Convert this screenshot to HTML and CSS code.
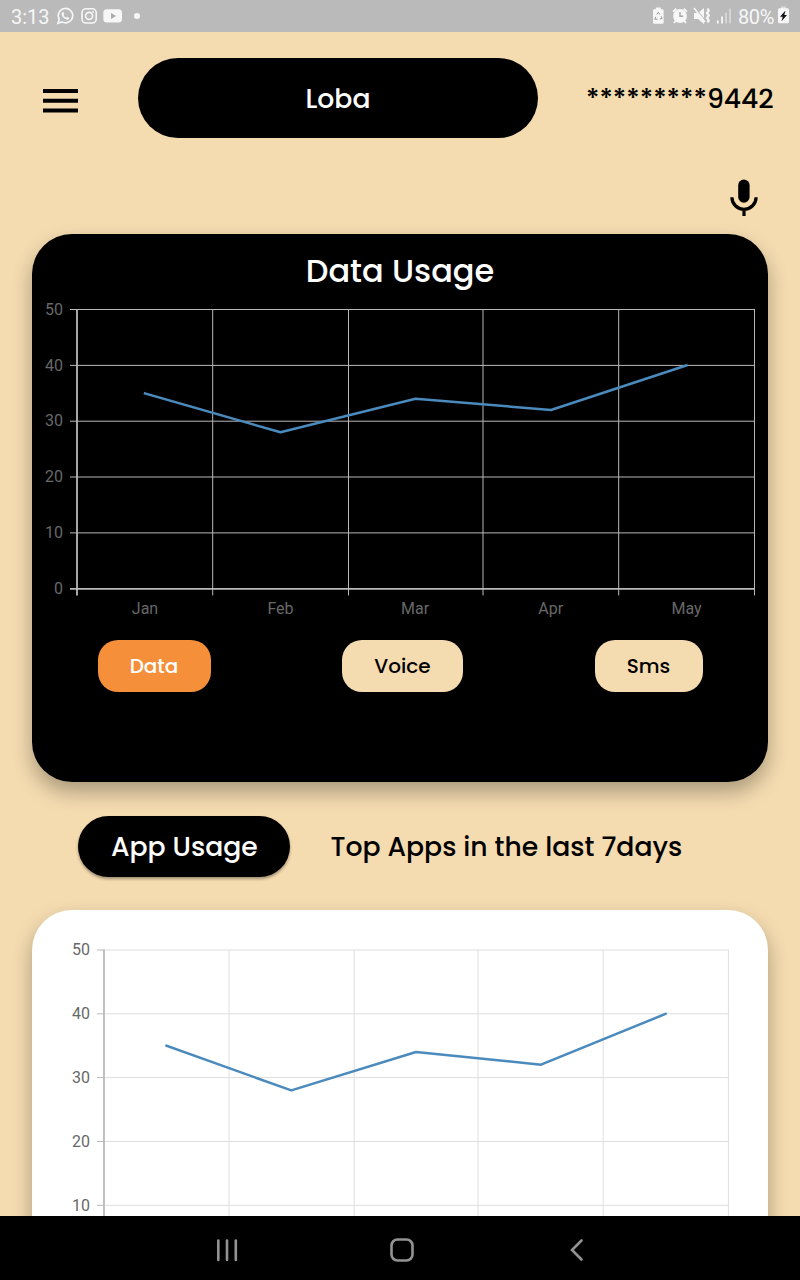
FILE: index.html
```html
<!DOCTYPE html>
<html lang="en">
<head>
<meta charset="utf-8">
<title>Data Usage</title>
<link rel="stylesheet" href="styles.css">
</head>
<body>
<div class="screen">
  <header class="status">
    <span class="clock">3:13</span>
    <svg class="status-left" width="90" height="20" viewBox="54 6 90 20" fill="none" stroke="#f7f7f7" stroke-width="1.6">
      <path d="M58 23.2l1.2-4.1a7.2 7.2 0 1 1 2.8 2.8z"/>
      <path d="M62.3 12.3c-1.8 1.7.1 4.9 2.2 6.3 2.2 1.5 4.3 1.4 4.8-.5l-2.2-1.4-1.1 1c-1.2-.6-2-1.5-2.5-2.6l.9-1-1-2z" fill="#f7f7f7" stroke="none"/>
      <rect x="82" y="8.800" width="14.200" height="14.200" rx="4"/>
      <circle cx="89.100" cy="15.900" r="3.500"/><circle cx="93" cy="12" r=".9" fill="#f7f7f7" stroke="none"/>
      <rect x="103.300" y="9.200" width="18.700" height="13.400" rx="3.500" fill="#f7f7f7" stroke="none"/>
      <path d="M111 13v6l5-3z" fill="#aaa" stroke="none"/>
      <circle cx="137" cy="16" r="3" fill="#f7f7f7" stroke="none"/>
    </svg>
    <svg class="status-right" width="84" height="20" viewBox="650 6 84 20" fill="none" stroke="#f7f7f7" stroke-width="1.800">
      <path d="M653 10.500q0-1.200 1.200-1.200h1.600V7.500h5v1.800h1.600q1.200 0 1.200 1.200v12q0 1.200-1.200 1.200h-8.200q-1.200 0-1.200-1.200z" fill="#f7f7f7" stroke="none"/>
      <path d="M656.800 14.500l1.500-2.300 1.500 2.300M661 16.200l1.100 2.300-2.300.5M657.500 19.200h-2.800l1.200-2.400" stroke="#999" stroke-width="1"/>
      <circle cx="680" cy="16" r="6" fill="#f7f7f7"/>
      <path d="M680 12v4.300h3.300" stroke="#aaa" stroke-width="1.500"/>
      <path d="M673 11.600l3.300-3M687 11.600l-3.300-3M675.800 20.700l-1.800 2.300M684.200 20.700l1.800 2.300"/>
      <path d="M694 13h4l6-5v16l-6-5h-4z" fill="#f7f7f7" stroke="none"/>
      <path d="M694.800 7.300l10.500 13.200" stroke="#bababa" stroke-width="1.200"/><path d="M694 8l11 14" stroke-width="1.500"/>
      <path d="M707.500 8.500l1.300 2-1.800 2.500 1.800 2.500-1.800 2.500 1.800 2.500-1.300 2" stroke-width="2.200"/>
      <path d="M717.800 20.500v3M722 16.500v7" stroke-width="1.800"/>
      <path d="M726 12.500v11M730 8.500v15" stroke="#d7d7d7" stroke-width="1.800"/>
    </svg>
    <span class="percent">80%</span>
    <svg width="12" height="20" viewBox="778 6 12 20">
      <path d="M781 6.500h5v3h-5z" fill="#ddd"/><rect x="778" y="8.300" width="11" height="15" rx="1.500" fill="#f7f7f7"/>
      <path d="M785.500 10.500l-5.500 6.300h2.700l-1.200 4.500 5.500-6.300h-2.700z" fill="#111"/>
    </svg>
  </header>

  <main class="content">
    <div class="top">
      <svg class="menu" width="36" height="26" viewBox="43 88 36 26" fill="#000"><path d="M43 89h35v4H43zM43 98.800h35v3.900H43zM43 108.500h35v3.900H43z"/></svg>
      <div class="name">Loba</div>
      <div class="number">*********9442</div>
    </div>
    <div class="voice-row">
      <svg width="28" height="38" viewBox="729.500 179 28 38">
        <rect x="737.700" y="179.500" width="11.400" height="23.200" rx="5.700"/>
        <path d="M731.400 197.200a12.100 12.100 0 0 0 24.200 0M743.500 209v7" fill="none" stroke="#000" stroke-width="3.200"/>
      </svg>
    </div>

    <section class="card dark">
      <h1>Data Usage</h1>
      <svg class="chart" width="736" height="325" viewBox="32 300 736 325">
        <g fill="none" stroke="#b9b9b9" stroke-width="1">
          <path d="M70 309.500H755M70 365.400H755M70 421.200H755M70 477H755M70 532.900H755"/>
          <path d="M212.700 309V595.500M348.500 309V595.500M483 309V595.500M618.700 309V595.500M754.500 309V595.500"/>
          <path d="M77 309V595.500M70 588.800H755" stroke-width="1.800"/>
        </g>
        <path class="line" d="M145 393.400l135.500 38.900L415.500 398.800 551 410 686.500 365.400"/>
        <g class="labels y">
          <text x="63" y="315">50</text><text x="63" y="371">40</text><text x="63" y="426">30</text>
          <text x="63" y="482">20</text><text x="63" y="538">10</text><text x="63" y="594">0</text>
        </g>
        <g class="labels x">
          <text x="145" y="614">Jan</text><text x="280.500" y="614">Feb</text><text x="415" y="614">Mar</text>
          <text x="550.700" y="614">Apr</text><text x="686.500" y="614">May</text>
        </g>
      </svg>
      <div class="tabs">
        <button class="tab active">Data</button>
        <button class="tab voice">Voice</button>
        <button class="tab sms">Sms</button>
      </div>
    </section>

    <div class="usage-row">
      <button class="usage">App Usage</button>
      <span class="caption">Top Apps in the last 7days</span>
    </div>

    <section class="card light">
      <svg class="chart" width="736" height="306" viewBox="32 910 736 306">
        <g fill="none" stroke="#dedede" stroke-width="1">
          <path d="M104 950H729M104 1013.800H729M104 1077.600H729M104 1141.500H729M104 1205.300H729"/>
          <path d="M229 950V1216M354.200 950V1216M478 950V1216M603.200 950V1216M728.400 950V1216"/>
          <path d="M97 950h7M97 1013.800h7M97 1077.600h7M97 1141.500h7M97 1205.300h7" stroke="#b9b9b9"/>
          <path d="M104 949.500V1216" stroke="#b9b9b9" stroke-width="1.800"/>
        </g>
        <path class="line" d="M166.500 1045.800l124.800 44.600L416 1052l125 12.700 124.500-50.800"/>
        <g class="labels y">
          <text x="90" y="955">50</text><text x="90" y="1019">40</text><text x="90" y="1083">30</text>
          <text x="90" y="1147">20</text><text x="90" y="1211">10</text>
        </g>
      </svg>
    </section>
  </main>

  <nav class="navbar">
    <svg width="800" height="64" viewBox="0 1216 800 64" fill="none" stroke="#939393" stroke-width="2.600" stroke-linecap="round">
      <path d="M218.300 1240.500v19.500M227 1240.500v19.500M235.800 1240.500v19.500"/>
      <rect x="391.500" y="1239.500" width="21" height="21" rx="6"/>
      <path d="M581.500 1240.500l-9.500 9.500 9.500 9.500"/>
    </svg>
  </nav>
</div>
</body>
</html>
```
FILE: styles.css
```css
* { box-sizing: border-box; }
body { margin: 0; font-family: Poppins, Inter, "Noto Sans", sans-serif; font-weight: 500; color: #000; }
svg { display: block; flex: none; }
button { border: 0; padding: 0; font: inherit; color: inherit; }
.screen { width: 800px; height: 1280px; display: flex; flex-direction: column; overflow: hidden; background: #f4dbb0; }
.status { height: 32px; flex: none; display: flex; align-items: center; padding: 0 10px 0 11px; background: #bababa; color: #f7f7f7; font: 400 20px/35px Roboto, sans-serif; }
.clock { width: 43px; white-space: nowrap; }
.status-right { margin-left: auto; }
.percent { width: 40px; margin-left: 4px; letter-spacing: -0.4px; }
.clock, .percent { padding-top: 2px; }
.content { flex: 1; min-height: 0; overflow: hidden; padding: 26px 32px 0; }
.top { height: 80px; display: flex; align-items: center; margin-right: -32px; }
.menu { margin: 5px 59px 0 11px; }
.name { width: 400px; height: 80px; border-radius: 40px; background: #000; color: #fff; text-align: center; font-size: 26.670px; line-height: 81px; }
.number { margin-left: 48px; font-size: 26.670px; line-height: 81px; white-space: nowrap; }
.voice-row { height: 96px; padding: 41px 10.500px 0 0; display: flex; justify-content: flex-end; align-items: flex-start; }
.card { border-radius: 40px; box-shadow: 0 10px 20px rgba(0, 0, 0, 0.3); }
.dark { height: 548px; background: #000; }
.dark h1 { margin: 0; height: 66px; color: #fff; text-align: center; font-size: 32px; font-weight: 500; line-height: 74px; }
.line { fill: none; stroke: #4a8abd; stroke-width: 2.500; stroke-linejoin: round; stroke-linecap: square; }
.labels { font: 400 16px Roboto, sans-serif; fill: #686868; }
.y { text-anchor: end; }
.x { text-anchor: middle; }
.tabs { display: flex; justify-content: space-between; padding: 15px 65.500px 0; }
.tab { width: 113px; height: 51.500px; border-radius: 20px; background: #f4dbb0; font-size: 20px; line-height: 53px; }
.active { background: #f58f39; color: #fff; }
.voice { width: 121px; }
.sms { width: 108px; }
.usage-row { height: 128px; display: flex; align-items: center; padding-left: 46.400px; gap: 40px; font-size: 26.670px; }
.usage { width: 212px; height: 61px; margin-top: 1px; border-radius: 31px; background: #000; color: #fff; line-height: 61px; box-shadow: 0 2px 3px rgba(0, 0, 0, 0.35); }
.caption { white-space: nowrap; padding-top: 1px; }
.light { height: 420px; background: #fff; }
.navbar { height: 64px; flex: none; background: #000; }
```
